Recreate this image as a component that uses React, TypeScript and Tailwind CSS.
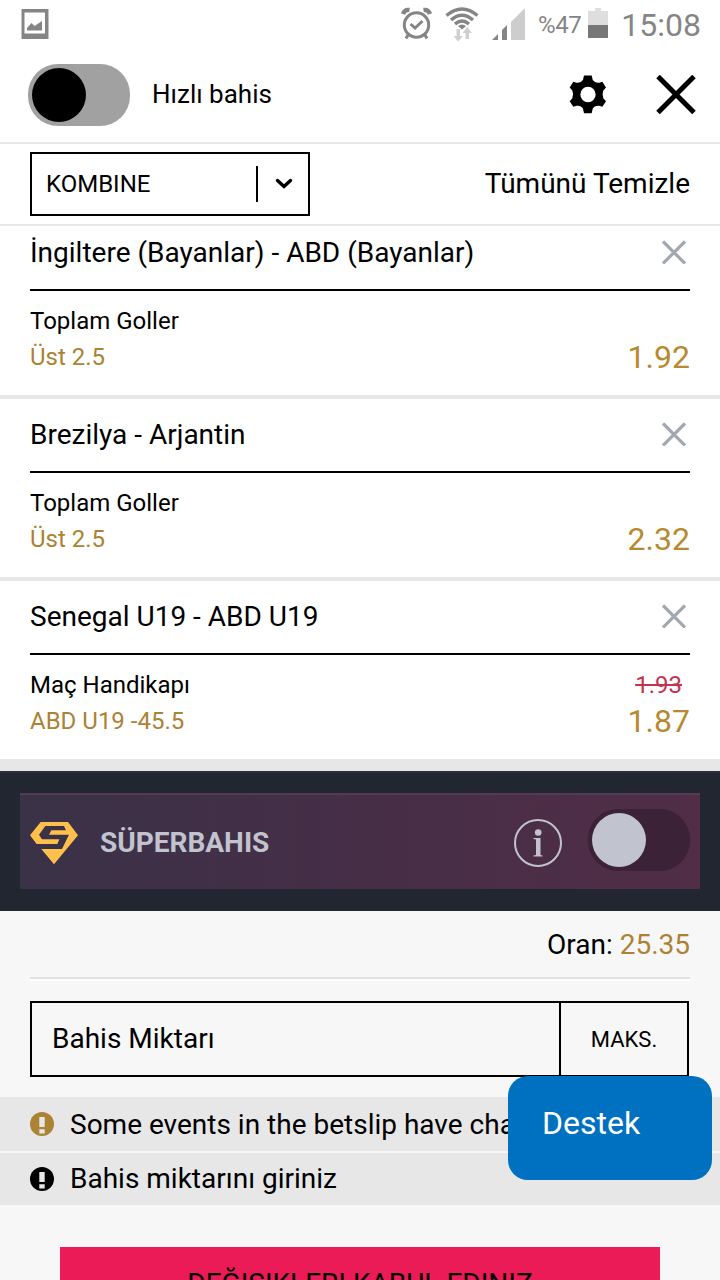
interface betIFC {
    id: number;
    match: string;
    market: string;
    pick: string;
    odd: string;
    oldOdd?: string;
}

const bets: betIFC[] = [
    { id: 1, match: "İngiltere (Bayanlar) - ABD (Bayanlar)", market: "Toplam Goller", pick: "Üst 2.5", odd: "1.92" },
    { id: 2, match: "Brezilya - Arjantin", market: "Toplam Goller", pick: "Üst 2.5", odd: "2.32" },
    { id: 3, match: "Senegal U19 - ABD U19", market: "Maç Handikapı", pick: "ABD U19 -45.5", odd: "1.87", oldOdd: "1.93" },
];

function StatusBar() {
    return (
        <div className="h-12 flex items-start justify-between pl-[21px] pr-[19px] text-[#858585]">
            <svg className="mt-[9px]" width="28" height="30" viewBox="0 0 28 30">
                <path d="M0.500 0h27v30h-27zM3.500 3.500v21h20.500v-21z" fill="currentColor" fillRule="evenodd" />
                <path d="M6 21.500v-2.500l4.500-5 3 3 7.500-5v9.500z" fill="currentColor" />
            </svg>
            <div className="flex items-start">
                <svg width="130" height="44" viewBox="0 0 130 44" fill="none">
                    {/* alarm */}
                    <g stroke="currentColor">
                        <circle cx="21.5" cy="25" r="12.2" strokeWidth="3" />
                        <path d="M15.500 24l4.500 4 7.500-7" strokeWidth="3" />
                        <path d="M8 14c1-3 3.500-4.500 6.500-4M35 14c-1-3-3.500-4.500-6.500-4" strokeWidth="4.4" />
                        <path d="M13 35l-2 3.500M30 35l2 3.500" strokeWidth="3" />
                    </g>
                    {/* wifi */}
                    <g stroke="currentColor" strokeWidth="3.4">
                        <path d="M51.500 15.500Q67 2.500 82.500 15.500" />
                        <path d="M56 20Q67 10.500 78 20" />
                        <path d="M60 24Q67 18 74 24" />
                    </g>
                    <path d="M63 26q4-3 8 0l-4 3.500z" fill="currentColor" />
                    <path d="M61.500 29h3.500v7h3l-4.800 5.500-4.700-5.500h3zM70.500 39h3.500v-6h3l-4.700-6-4.800 6h3z" fill="#cfcfcf" />
                    {/* signal */}
                    <path d="M97 40l6-6v6zM107 30l5-5v15h-5z" fill="currentColor" />
                    <path d="M116 22l14-14v32h-14z" fill="#cdcdcd" />
                </svg>
                <span className="ml-[13px] mt-[9px] text-[24px] leading-8 tracking-[-0.4px]">%47</span>
                <svg className="ml-[7px] mt-2" width="20" height="30" viewBox="0 0 20 30">
                    <path d="M0 3h7V0h6v3h7v14H0z" fill="#dedede" />
                    <path d="M0 17h20v13H0z" fill="#777" />
                </svg>
                <span className="ml-[13px] mt-1 text-[32px] leading-[42px]">15:08</span>
            </div>
        </div>
    );
}

function GearIcon() {
    return (
        <svg width="38" height="40" viewBox="567 225.5 114 120">
            <path
                fillRule="evenodd"
                d="M612 227h23l3 13q6 10 20 9l9-3 11 17-8 9q-5 12 0 23l8 9-11 17-10-3q-14-1-19 9l-3 13h-23l-3-13q-5-10-19-9l-10 3-11-17 8-9q5-11 0-23l-8-9 11-17 9 3q14 1 20-9zM624 261a23 23 0 1 0 0 46a23 23 0 1 0 0-46z"
            />
        </svg>
    );
}

function SuperLogo() {
    return (
        <svg width="48" height="43" viewBox="90 216 144 129">
            <path d="M122 216h82l30 40-72 87-38-46h62l21-43h-60l7-13h44l-6-13h-56l-19 26 9 14h52l-6 14h-62l-20-26z" fill="#ffbf4d" />
        </svg>
    );
}

function Alert({ text, warn }: { text: string; warn?: boolean }) {
    return (
        <div className={`flex items-center px-[30px] bg-[#e7e7e7] text-[28px] whitespace-nowrap ${warn ? "h-[54px] pt-px" : "h-[52px]"}`}>
            <svg className={warn ? "mb-px text-[#ac8235]" : "mb-px text-black"} width="24" height="24" viewBox="0 0 24 24">
                <circle cx="12" cy="12" r="12" fill="currentColor" />
                <path d="M9.300 5h5.400v10H9.300zM9.300 17.300h5.400v4.200H9.300z" fill="#e7e7e7" />
            </svg>
            <span className="ml-4">{text}</span>
        </div>
    );
}

function BetItem({ bet }: { bet: betIFC }) {
    return (
        <div className="shrink-0 border-b-4 border-[#e7e7e7] px-[30px] last:border-b-12">
            <div className="h-[74px] flex items-center justify-between border-b-2 border-black">
                <span className="text-[28px]">{bet.match}</span>
                <svg className="mr-1 mb-[2px]" width="24" height="24" viewBox="0 0 24 24">
                    <path d="M1 1.500l22 22M23 1.500l-22 22" stroke="#a2a8b0" strokeWidth="3.2" />
                </svg>
            </div>
            <div className="h-[104px] flex justify-between pt-3 leading-9">
                <div className="text-[24px]">
                    <div>{bet.market}</div>
                    <div className="text-[#ac8235]">{bet.pick}</div>
                </div>
                <div className="text-right">
                    <div className="h-9 pr-2 text-[24px] text-[#c2334f] line-through">{bet.oldOdd}</div>
                    <div className="text-[32px] text-[#b78a30]">{bet.odd}</div>
                </div>
            </div>
        </div>
    );
}

export default function App() {
    return (
        <div className="relative w-[720px] h-[1280px] overflow-hidden bg-white text-black font-['Roboto',sans-serif]">
            <StatusBar />
            <div className="h-24 flex items-center border-b-2 border-[#e7e7e7] pl-7 pr-6">
                <div className="w-[102px] h-[62px] rounded-[30px] bg-[#a1a1a1] p-1">
                    <div className="size-[54px] rounded-full bg-black" />
                </div>
                <span className="ml-[22px] mb-[2px] text-[26px]">Hızlı bahis</span>
                <div className="ml-auto mb-px flex items-center">
                    <GearIcon />
                    <svg className="ml-[49px]" width="40" height="40" viewBox="0 0 40 40">
                        <path d="M2 1.500l36 36M38 1.500l-36 36" stroke="black" strokeWidth="5" />
                    </svg>
                </div>
            </div>
            <div className="h-[82px] flex items-center justify-between border-b-2 border-[#e7e7e7] px-[30px]">
                <div className="w-[280px] h-16 flex items-center border-2 border-black pl-[14px] text-[24px]">
                    <span>KOMBINE</span>
                    <div className="ml-auto h-9 w-[52px] flex items-center justify-center border-l-2 border-black pl-[2px]">
                        <svg width="18" height="12" viewBox="0 0 18 12" fill="none">
                            <path d="M2.500 2.500L9 8.500l6.500-6" stroke="black" strokeWidth="3.4" strokeLinecap="round" />
                        </svg>
                    </div>
                </div>
                <span className="text-[28px]">Tümünü Temizle</span>
            </div>

            {/* the list is scrolled, so the first item is cut at the top */}
            <div className="h-[545px] flex flex-col justify-end overflow-hidden">
                {bets.map((bet) => (
                    <BetItem key={bet.id} bet={bet} />
                ))}
            </div>

            <div className="h-[140px] border-t-2 border-[#2b2f3d] bg-[#222631] px-5 pt-5">
                <div className="h-24 flex items-center border-t-2 border-[#523b54] bg-linear-to-r from-[#3a3247] via-[#462e47] to-[#512d47] px-[10px] pt-[2px]">
                    <SuperLogo />
                    <span className="ml-[22px] text-[28px] font-bold text-[#c1c3cf]">SÜPERBAHIS</span>
                    <div className="ml-auto size-12 rounded-full border-2 border-[#c1c3cf] flex items-center justify-center">
                        <svg className="mb-px" width="10" height="28" viewBox="0 0 10 28" fill="#c1c3cf">
                            <circle cx="5.2" cy="3.5" r="3.3" />
                            <path d="M0.500 9H7.500v17l2 .5V27.500H0.500v-1L3 26V10.500L.5 10z" />
                        </svg>
                    </div>
                    <div className="ml-[26px] mb-[6px] w-[102px] h-[62px] rounded-[30px] bg-[#3c2236] p-1">
                        <div className="size-[54px] rounded-full bg-[#c1c3cf]" />
                    </div>
                </div>
            </div>

            <div className="h-[369px] bg-[#f7f7f7]">
                <div className="mx-[30px] h-[68px] flex items-center justify-end border-b-2 border-[#e1e1e1] pt-[2px] text-[28px]">
                    Oran:&nbsp;<span className="text-[#ac8235]">25.35</span>
                </div>
                <div className="mx-[30px] h-[2px] bg-white" />
                <div className="ml-[30px] mt-5 w-[659px] h-[76px] flex border-2 border-black">
                    <div className="flex-1 flex items-center pl-5 text-[28px]">Bahis Miktarı</div>
                    <div className="w-[128px] flex items-center justify-center border-l-2 border-black text-[22px]">MAKS.</div>
                </div>
                <div className="mt-5 flex flex-col gap-[2px]">
                    <Alert warn text="Some events in the betslip have changed" />
                    <Alert text="Bahis miktarını giriniz" />
                </div>
                <div className="mx-[60px] mt-[42px] h-20 bg-[#ea1b57] pt-4 text-center text-[28px] leading-[42px]">DEĞIŞIKLERI KABUL EDINIZ</div>
            </div>

            <div className="absolute right-2 bottom-[100px] w-[204px] h-[104px] rounded-[20px] bg-[#0070c0] pl-[34px] pt-6 text-[32px] leading-[46px] text-white">Destek</div>
        </div>
    );
}
